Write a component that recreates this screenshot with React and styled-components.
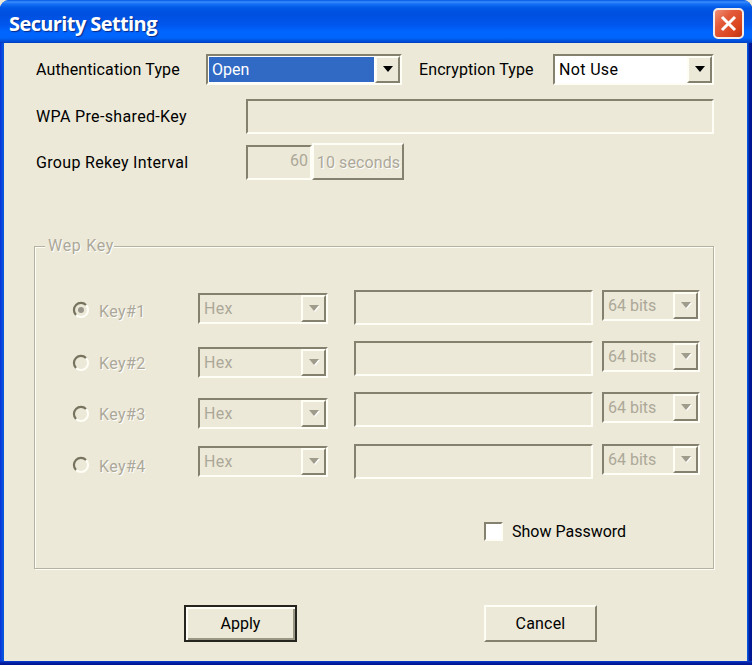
import React from 'react'
import styled, { createGlobalStyle } from 'styled-components'

const GlobalStyle = createGlobalStyle`
    * {
        box-sizing: border-box;
    }

    body {
        margin: 0;
        background: #ece9d8;
        overflow: hidden;
    }
`

const Dialog = styled.div`
    width: 752px;
    height: 665px;
    display: flex;
    flex-direction: column;
    background: linear-gradient(90deg, #0831d9 0, #0855dd 3px, #0855dd 748px, #001ea0 749px, #00138c 752px);
    border-radius: 9px 9px 0 0;
    overflow: hidden;
    font-family: Roboto, "Liberation Sans", sans-serif;
    font-size: 16px;
    color: #000;
`

const TitleBar = styled.header`
    height: 43px;
    flex: none;
    display: flex;
    align-items: center;
    justify-content: space-between;
    padding: 4px 8px 0 9px;
    background: linear-gradient(180deg, #0058e0 0, #3b8cff 2px, #1470f5 4px, #0057e5 8px, #0050e0 14px, #0055eb 24px, #0066ff 32px, #0064fa 38px, #0048d0 42px, #003dbd 43px);
`

const Title = styled.h1`
    margin: 0;
    color: white;
    font: bold 20px/24px "Open Sans", "Noto Sans", sans-serif;
    letter-spacing: ${props => props.$spacing}px;
    text-shadow: 1px 1px 1px #0a2a86;
    white-space: nowrap;
`

const CloseButton = styled.button`
    width: 31px;
    height: 31px;
    padding: 0;
    border: 2px solid #f4ece8;
    border-radius: 5px;
    background: linear-gradient(135deg, #f09078 0, #e35b3b 35%, #d9441c 75%, #b93512 100%);

    svg {
        display: block;
        margin: auto;
    }
`

const Body = styled.main`
    height: 618px;
    margin: 0 5px 0 4px;
    padding: 11px 34px 0 30px;
    background: #ece9d8;
    box-shadow: 0 1px 0 #1646c8;
`

const BottomEdge = styled.div`
    flex: 1;
    background: linear-gradient(180deg, #0b3dce 0, #001ea0 2px, #00138c 4px);
`

const Line = styled.div`
    display: flex;
    align-items: flex-start;
    height: ${props => props.$height}px;
`

const Label = styled.label`
    display: block;
    width: ${props => props.$width ? `${props.$width}px` : 'auto'};
    margin-top: ${props => props.$top || 0}px;
    padding-left: ${props => props.$left || 0}px;
    flex: none;
    line-height: 20px;
    letter-spacing: ${props => props.$spacing || 0}px;
    white-space: nowrap;
    color: ${props => props.$disabled ? '#aca899' : '#000'};
    text-shadow: ${props => props.$disabled ? '1px 1px 0 #fff' : 'none'};
`

const Field = styled.div`
    width: ${props => props.$width}px;
    height: 35px;
    margin: ${props => props.$top || 0}px 0 0 ${props => props.$left || 0}px;
    padding: 4px 2px 0 0;
    flex: none;
    border: 2px solid;
    border-color: #85816f #fffef6 #fffef6 #85816f;
    line-height: 20px;
    text-align: right;
    color: #aca899;
`

const ComboBox = styled.div`
    display: flex;
    width: ${props => props.$width}px;
    height: 31px;
    margin: ${props => props.$top || 0}px 0 0 ${props => props.$left || 0}px;
    padding: 1px;
    flex: none;
    border: 2px solid;
    border-color: #85816f #fffef6 #fffef6 #85816f;
    background: ${props => props.$disabled ? '#ece9d8' : 'white'};
    color: ${props => props.$disabled ? '#aca899' : 'black'};
`

const ComboValue = styled.span`
    flex: 1;
    padding: 1px 0 0 3px;
    line-height: 24px;
    letter-spacing: ${props => props.$spacing || 0}px;
    white-space: nowrap;
    background: ${props => props.$selected ? '#316ac5' : 'transparent'};
    color: ${props => props.$selected ? 'white' : 'inherit'};
`

const ComboArrow = styled.span`
    display: flex;
    align-items: center;
    justify-content: center;
    width: 25px;
    margin: -1px -1px -1px 1px;
    flex: none;
    border: 2px solid;
    border-color: #fffef4 #85816f #85816f #fffef4;
    background: #ece9d8;
`

const Button = styled.button`
    width: ${props => props.$width}px;
    height: 37px;
    margin: 0;
    padding: ${props => props.$disabled ? '1px 0 0 1px' : '0'};
    flex: none;
    border: 2px solid;
    border-color: #fffef6 #85816f #85816f #fffef6;
    background: #ece9d8;
    font: inherit;
    letter-spacing: ${props => props.$spacing || 0}px;
    white-space: nowrap;
    color: ${props => props.$disabled ? '#aca899' : '#000'};
    text-shadow: ${props => props.$disabled ? '1px 1px 0 #fff' : 'none'};
`

const DefaultButton = styled(Button)`
    border-color: #25241f;
    box-shadow: inset 2px 2px 0 #fffef6, inset -2px -2px 0 #9b9785;
`

const WepGroup = styled.fieldset`
    width: 680px;
    height: 333px;
    margin: 0;
    padding: 34px 0 0 37px;
    min-width: 0;
    border: 1px solid #b5b2a1;
    box-shadow: 1px 1px 0 #fffef6, inset 1px 1px 0 #fffef6;
`

const Legend = styled.legend`
    margin-left: -27px;
    padding: 0 0 0 3px;
    background: #ece9d8;
    line-height: 20px;
    letter-spacing: ${props => props.$spacing}px;
    color: #aca899;
    text-shadow: 1px 1px 0 #fff;
`

const Radio = styled.span`
    width: 18px;
    height: 18px;
    margin-top: ${props => props.$top}px;
    flex: none;

    svg {
        display: block;
    }
`

const CheckBox = styled.span`
    width: 19px;
    height: 19px;
    flex: none;
    border: 2px solid;
    border-color: #85816f #fffef6 #fffef6 #85816f;
    background: white;
`

const ShowPassword = styled.div`
    display: flex;
    align-items: center;
    gap: 9px;
    margin: 26px 0 0 412px;
`

const Actions = styled.footer`
    display: flex;
    gap: 187px;
    margin: 36px 0 0 150px;
`

// top offsets of the controls inside each key row
const keys = [
    { name: 'Key#1', height: 51, radio: 11, label: 12, type: 3 },
    { name: 'Key#2', height: 51, radio: 13, label: 13, type: 6 },
    { name: 'Key#3', height: 52, radio: 13, label: 13, type: 6 },
    { name: 'Key#4', height: 51, radio: 12, label: 13, type: 2 },
]

const Combo = ({ value, selected, spacing, disabled, ...props }) => (
    <ComboBox $disabled={disabled} {...props}>
        <ComboValue $selected={selected} $spacing={spacing}>{value}</ComboValue>
        <ComboArrow>
            <svg width="12" height="7" viewBox="0 0 12 7">
                {disabled && <path d="M2 1h10L7 7z" fill="#fff" />}
                <path d="M1 0h10L6 6z" fill={disabled ? '#a09c8c' : '#000'} />
            </svg>
        </ComboArrow>
    </ComboBox>
)

const RadioMark = ({ checked, top }) => (
    <Radio $top={top}>
        <svg width="18" height="18" viewBox="0 0 18 18" fill="none">
            <path d="M4 14A7.070 7.070 0 0 0 14 4" stroke="#fffef6" strokeWidth="2" />
            <path d="M4 14A7.070 7.070 0 0 1 14 4" stroke="#77735f" strokeWidth="2.200" />
            {checked && <circle cx="9" cy="9" r="3" fill="#99958a" />}
        </svg>
    </Radio>
)

const App = () => (
    <>
        <GlobalStyle />
        <Dialog>
            <TitleBar>
                <Title $spacing={-0.6}>Security Setting</Title>
                <CloseButton aria-label="Close">
                    <svg width="19" height="19" viewBox="0 0 19 19">
                        <path d="M3 3l13 13M16 3L3 16" stroke="white" strokeWidth="3" />
                    </svg>
                </CloseButton>
            </TitleBar>
            <Body>
                <Line $height={45}>
                    <Label $width={172} $left={2} $top={6} $spacing={0.12}>Authentication Type</Label>
                    <Combo $width={196} value="Open" selected />
                    <Label $width={151} $left={17} $top={6} $spacing={0.1}>Encryption Type</Label>
                    <Combo $width={161} value="Not Use" spacing={0.35} />
                </Line>
                <Line $height={44}>
                    <Label $width={212} $left={2} $top={8} $spacing={0.35}>WPA Pre-shared-Key</Label>
                    <Field $width={468} />
                </Line>
                <Line $height={93}>
                    <Label $width={212} $left={2} $top={10} $spacing={0.32}>Group Rekey Interval</Label>
                    <Field $width={66} $top={2}>60</Field>
                    <Button $width={92} $spacing={0.1} $disabled>10 seconds</Button>
                </Line>
                <WepGroup>
                    <Legend $spacing={0.7}>Wep Key</Legend>
                    {keys.map(key => (
                        <Line key={key.name} $height={key.height}>
                            <RadioMark checked={key.name === 'Key#1'} top={key.radio} />
                            <Label $disabled $width={108} $left={9} $top={key.label} $spacing={0.4}>{key.name}</Label>
                            <Combo disabled $width={130} $top={key.type} value="Hex" spacing={0.3} />
                            <Field $width={239} $left={26} />
                            <Combo disabled $width={98} $left={9} value="64 bits" />
                        </Line>
                    ))}
                    <ShowPassword>
                        <CheckBox />
                        <Label $top={1}>Show Password</Label>
                    </ShowPassword>
                </WepGroup>
                <Actions>
                    <DefaultButton $width={113}>Apply</DefaultButton>
                    <Button $width={113} $spacing={0.2}>Cancel</Button>
                </Actions>
            </Body>
            <BottomEdge />
        </Dialog>
    </>
)

export default App
